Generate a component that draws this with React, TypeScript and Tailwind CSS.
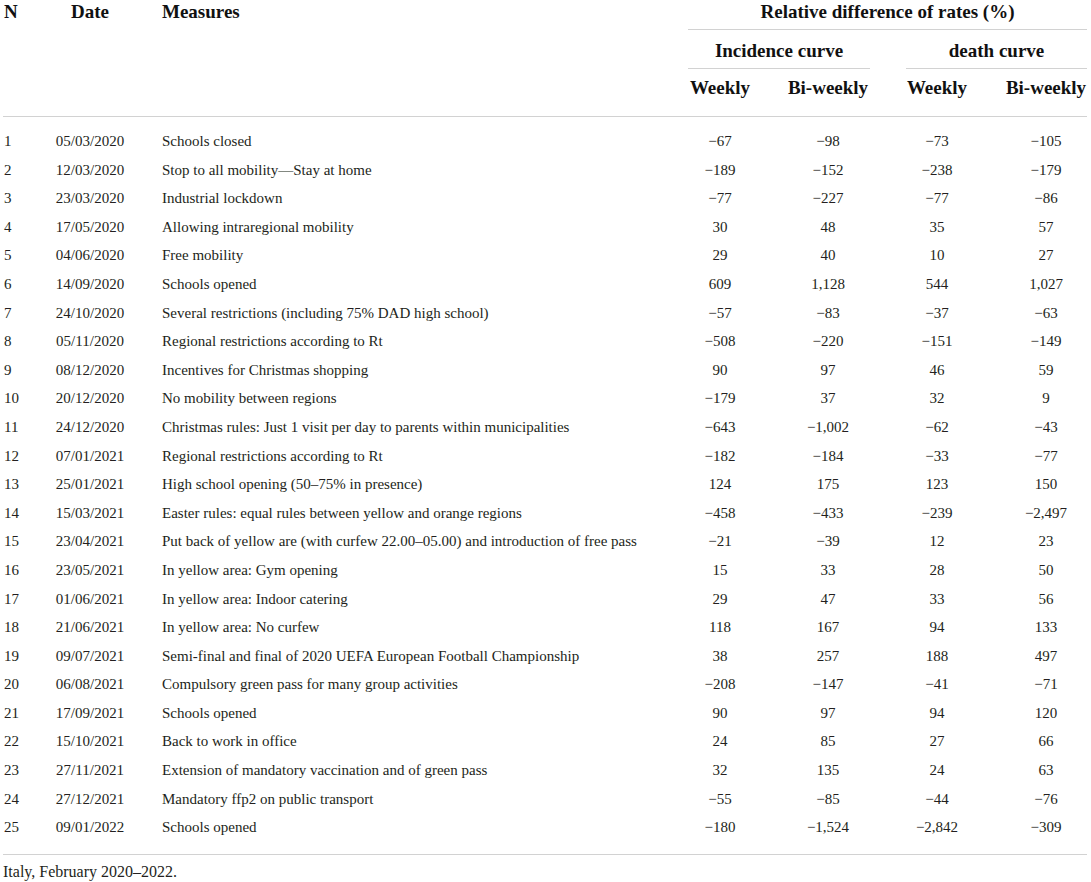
const rows: [string, string, string, string, string, string, string][] = [
  ['1', '05/03/2020', 'Schools closed', '−67', '−98', '−73', '−105'],
  ['2', '12/03/2020', 'Stop to all mobility—Stay at home', '−189', '−152', '−238', '−179'],
  ['3', '23/03/2020', 'Industrial lockdown', '−77', '−227', '−77', '−86'],
  ['4', '17/05/2020', 'Allowing intraregional mobility', '30', '48', '35', '57'],
  ['5', '04/06/2020', 'Free mobility', '29', '40', '10', '27'],
  ['6', '14/09/2020', 'Schools opened', '609', '1,128', '544', '1,027'],
  ['7', '24/10/2020', 'Several restrictions (including 75% DAD high school)', '−57', '−83', '−37', '−63'],
  ['8', '05/11/2020', 'Regional restrictions according to Rt', '−508', '−220', '−151', '−149'],
  ['9', '08/12/2020', 'Incentives for Christmas shopping', '90', '97', '46', '59'],
  ['10', '20/12/2020', 'No mobility between regions', '−179', '37', '32', '9'],
  ['11', '24/12/2020', 'Christmas rules: Just 1 visit per day to parents within municipalities', '−643', '−1,002', '−62', '−43'],
  ['12', '07/01/2021', 'Regional restrictions according to Rt', '−182', '−184', '−33', '−77'],
  ['13', '25/01/2021', 'High school opening (50–75% in presence)', '124', '175', '123', '150'],
  ['14', '15/03/2021', 'Easter rules: equal rules between yellow and orange regions', '−458', '−433', '−239', '−2,497'],
  ['15', '23/04/2021', 'Put back of yellow are (with curfew 22.00–05.00) and introduction of free pass', '−21', '−39', '12', '23'],
  ['16', '23/05/2021', 'In yellow area: Gym opening', '15', '33', '28', '50'],
  ['17', '01/06/2021', 'In yellow area: Indoor catering', '29', '47', '33', '56'],
  ['18', '21/06/2021', 'In yellow area: No curfew', '118', '167', '94', '133'],
  ['19', '09/07/2021', 'Semi-final and final of 2020 UEFA European Football Championship', '38', '257', '188', '497'],
  ['20', '06/08/2021', 'Compulsory green pass for many group activities', '−208', '−147', '−41', '−71'],
  ['21', '17/09/2021', 'Schools opened', '90', '97', '94', '120'],
  ['22', '15/10/2021', 'Back to work in office', '24', '85', '27', '66'],
  ['23', '27/11/2021', 'Extension of mandatory vaccination and of green pass', '32', '135', '24', '63'],
  ['24', '27/12/2021', 'Mandatory ffp2 on public transport', '−55', '−85', '−44', '−76'],
  ['25', '09/01/2022', 'Schools opened', '−180', '−1,524', '−2,842', '−309'],
];

// column template shared by header and body
const cols = 'grid grid-cols-[52px_70px_541px_108px_108px_110px_95px]';

export default function App() {
  return (
    <div
      className="w-[1091px] h-[882px] overflow-hidden bg-white text-[#231f20] pl-[3px]"
      style={{ fontFamily: '"Liberation Serif", "Times New Roman", serif' }}
    >
      <div className="w-[1084px]">
        {/* Header */}
        <div className={`${cols} font-bold text-[19px] text-[#111]`}>
          {/* row A */}
          <div className="h-[30px] leading-[24px] pl-[1px]">N</div>
          <div className="h-[30px] leading-[24px] text-center">Date</div>
          <div className="h-[30px] leading-[24px] pl-[37px]">Measures</div>
          <div className="col-span-4 h-[30px]">
            <div className="ml-[22px] h-[30px] leading-[24px] text-center border-b border-[#d2d2d2]">
              Relative difference of rates (%)
            </div>
          </div>

          {/* row B */}
          <div className="col-span-3" />
          <div className="col-span-2">
            <div className="ml-[22px] mr-[12px] pt-[9px] pb-[5px] leading-[24px] text-center border-b border-[#d2d2d2]">
              Incidence curve
            </div>
          </div>
          <div className="col-span-2">
            <div className="ml-[24px] pt-[9px] pb-[5px] leading-[24px] text-center border-b border-[#d2d2d2]">
              death curve
            </div>
          </div>

          {/* row C */}
          <div className="col-span-3" />
          <div className="pt-[7px] pb-[16px] leading-[24px] text-center">Weekly</div>
          <div className="pt-[7px] pb-[16px] leading-[24px] text-center">Bi-weekly</div>
          <div className="pt-[7px] pb-[16px] leading-[24px] text-center">Weekly</div>
          <div className="pt-[7px] pb-[16px] leading-[24px] text-center pl-[13px]">Bi-weekly</div>
        </div>
        <div className="h-px bg-[#d2d2d2]" />

        {/* Body */}
        <div className="pt-[10px] pb-[12px] text-[15px]">
          {rows.map((r) => (
            <div key={r[0]} className={`${cols} h-[28.6px] leading-[28.6px] whitespace-nowrap`}>
              <div className="pl-[1px]">{r[0]}</div>
              <div className="text-center">{r[1]}</div>
              <div className="pl-[37px]">{r[2]}</div>
              <div className="text-center">{r[3]}</div>
              <div className="text-center">{r[4]}</div>
              <div className="text-center">{r[5]}</div>
              <div className="text-center pl-[13px]">{r[6]}</div>
            </div>
          ))}
        </div>
        <div className="h-px bg-[#d2d2d2]" />

        <div className="pt-[7px] text-[16px] leading-[20px]">Italy, February 2020–2022.</div>
      </div>
    </div>
  );
}
